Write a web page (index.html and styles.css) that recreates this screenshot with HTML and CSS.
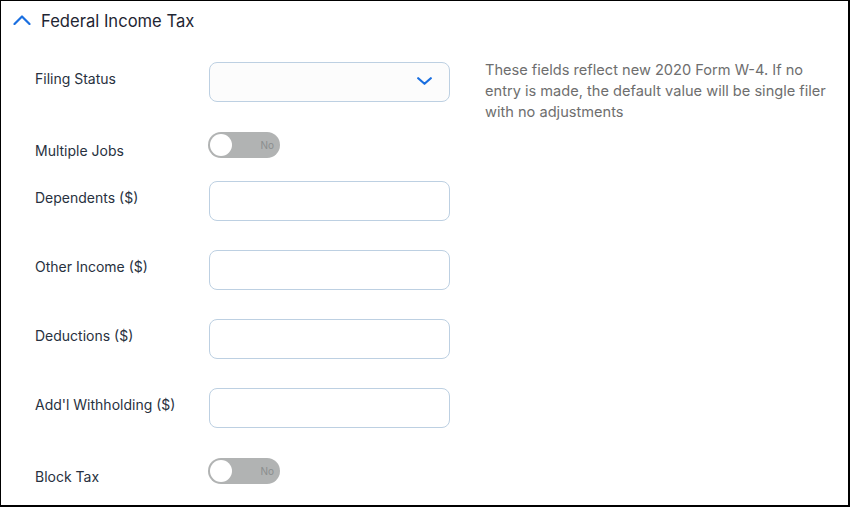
FILE: index.html
```html
<!DOCTYPE html>
<html lang="en">
<head>
<meta charset="utf-8">
<title>Federal Income Tax</title>
<link rel="stylesheet" href="styles.css">
</head>
<body>
<section class="panel">
  <header class="panel-header">
    <svg class="chev-up" width="18" height="10" viewBox="0 0 18 10" aria-hidden="true"><polyline points="1.5,9 9,1.5 16.5,9" fill="none" stroke="#1a6fe0" stroke-width="2.2" stroke-linecap="round" stroke-linejoin="round"/></svg>
    <h2 class="panel-title">Federal Income Tax</h2>
  </header>
  <div class="form">
    <div class="fields">
      <div class="row row-input">
        <label class="label">Filing Status</label>
        <div class="select">
          <svg width="15" height="8" viewBox="0 0 15 8" aria-hidden="true"><polyline points="1.2,1.2 7.5,6.8 13.8,1.2" fill="none" stroke="#1a6fe0" stroke-width="2.2" stroke-linecap="round" stroke-linejoin="round"/></svg>
        </div>
      </div>
      <div class="row row-toggle gap-30">
        <label class="label label-toggle">Multiple Jobs</label>
        <div class="toggle"><span class="knob"></span><span class="toggle-text">No</span></div>
      </div>
      <div class="row row-input gap-23">
        <label class="label">Dependents ($)</label>
        <div class="input"></div>
      </div>
      <div class="row row-input gap-29">
        <label class="label">Other Income ($)</label>
        <div class="input"></div>
      </div>
      <div class="row row-input gap-29">
        <label class="label">Deductions ($)</label>
        <div class="input"></div>
      </div>
      <div class="row row-input gap-29">
        <label class="label">Add'l Withholding ($)</label>
        <div class="input"></div>
      </div>
      <div class="row row-toggle gap-30">
        <label class="label label-toggle">Block Tax</label>
        <div class="toggle"><span class="knob"></span><span class="toggle-text">No</span></div>
      </div>
    </div>
    <p class="help">These fields reflect new 2020 Form W-4. If no entry is made, the default value will be single filer with no adjustments</p>
  </div>
</section>
</body>
</html>
```

FILE: styles.css
```css
* { box-sizing: border-box; }
html, body { margin: 0; padding: 0; background: #fff; }
body { font-family: Inter, "Noto Sans", "Liberation Sans", sans-serif; }

.panel {
  width: 850px;
  height: 507px;
  border-style: solid;
  border-color: #000;
  border-width: 1px 2px 2px 1px;
  overflow: hidden;
}

.panel-header {
  display: flex;
  align-items: center;
  padding: 7px 0 0 12px;
  height: 32px;
}
.chev-up { display: block; margin-top: -2px; }
.panel-title {
  margin: 0 0 0 10px;
  font-size: 16.6px;
  line-height: 24px;
  font-weight: 400;
  color: #1f2633;
}

.form {
  display: flex;
  align-items: flex-start;
  padding: 29px 0 0 34px;
}
.fields { display: flex; flex-direction: column; width: 415px; }

.row { display: flex; align-items: flex-start; }
.row-input { height: 40px; }
.row-toggle { height: 26px; }
.gap-23 { margin-top: 23px; }
.gap-29 { margin-top: 29px; }
.gap-30 { margin-top: 30px; }

.label {
  width: 174px;
  flex: none;
  padding-top: 7px;
  font-size: 14px;
  line-height: 20px;
  color: #283140;
  white-space: nowrap;
}
.label-toggle { padding-top: 9px; }

.input, .select {
  width: 241px;
  height: 40px;
  border: 1px solid #bdd0e2;
  border-radius: 8px;
  background: #fff;
}
.select {
  display: flex;
  align-items: center;
  justify-content: flex-end;
  padding-right: 17px;
  background: #fcfcfc;
}
.select svg { display: block; margin-top: -2px; }

.toggle {
  width: 72px;
  height: 26px;
  margin-left: -1px;
  border-radius: 13px;
  background: #b1b3b3;
  display: flex;
  align-items: center;
  justify-content: space-between;
  padding: 0 6px 0 2px;
}
.knob {
  width: 22px;
  height: 22px;
  border-radius: 50%;
  background: #fff;
}
.toggle-text {
  font-size: 10px;
  line-height: 12px;
  color: #8b8e8e;
}

.help {
  margin: -2px 0 0 35px;
  width: 345px;
  font-size: 14.6px;
  line-height: 21px;
  color: #6e6e6e;
}
```
